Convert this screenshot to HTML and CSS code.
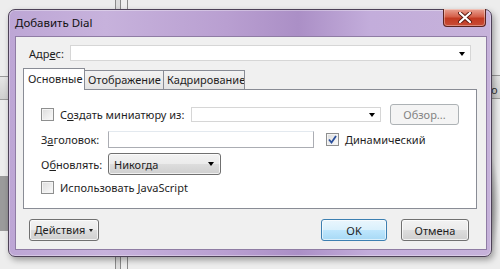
FILE: index.html
```html
<!DOCTYPE html>
<html lang="ru">
<head>
<meta charset="utf-8">
<title>Добавить Dial</title>
<link rel="stylesheet" href="styles.css">
</head>
<body>
<div class="desk">
  <div class="bg-lines bg-top"></div>
  <div class="bg-lines bg-bottom"></div>
  <div class="bg-band bg-left"></div>
  <div class="bg-block bg-left2"></div>
  <div class="bg-band bg-right"><span>o</span></div>
  <div class="bg-shadow"></div>

  <div class="window">
    <div class="titlebar">
      <span class="title">Добавить Dial</span>
      <div class="close">
        <svg width="14" height="11" viewBox="0 0 14 11"><path d="M2 1 L12 10 M12 1 L2 10" stroke="#5a1a12" stroke-width="4" stroke-linecap="round"/><path d="M2 1 L12 10 M12 1 L2 10" stroke="#ffffff" stroke-width="2.2" stroke-linecap="round"/></svg>
      </div>
    </div>
    <div class="client">
      <div class="addr-row">
        <span class="label">Адр<u>е</u>с:</span>
        <div class="combo addr-combo"><span class="arrow"></span></div>
      </div>

      <div class="tabs">
        <div class="tab active t1">Основные</div>
        <div class="tab t2">Отображение</div>
        <div class="tab t3">Кадрирование</div>
      </div>
      <div class="panel">
        <div class="row row1">
          <span class="check"></span>
          <span class="cb-label thumb-label">С<u>о</u>здать миниатюру из:</span>
          <div class="combo thumb-combo"><span class="arrow"></span></div>
          <div class="btn disabled browse">Обзор...</div>
        </div>
        <div class="row row2">
          <span class="label fixed">З<u>а</u>головок:</span>
          <div class="textbox title-box"></div>
          <span class="check checked">
            <svg width="9" height="9" viewBox="0 0 9 9"><path d="M1 4.5 L3.5 7.5 L8 1" fill="none" stroke="#2a4f9c" stroke-width="1.8"/></svg>
          </span>
          <span class="cb-label"><u>Д</u>инамический</span>
        </div>
        <div class="row row3">
          <span class="label fixed">О<u>б</u>новлять:</span>
          <div class="btn dropbtn"><span>Никогда</span><span class="arrow"></span></div>
        </div>
        <div class="row row4">
          <span class="check"></span>
          <span class="cb-label">Использовать <u>J</u>avaScript</span>
        </div>
      </div>

      <div class="footer">
        <div class="btn actions">Действия <span class="small-arrow"></span></div>
        <div class="spacer"></div>
        <div class="btn ok">OK</div>
        <div class="btn cancel">Отмена</div>
      </div>
    </div>
  </div>
</div>
</body>
</html>
```

FILE: styles.css
```css
* { box-sizing: border-box; }
html, body { margin: 0; padding: 0; }
body {
  width: 500px;
  height: 269px;
  overflow: hidden;
  background: #ececec;
  font-family: "Noto Sans", "Open Sans", sans-serif;
  font-size: 11px;
  color: #1e1e1e;
}
u { text-decoration: underline; text-underline-offset: 1px; }

.desk {
  position: relative;
  width: 500px;
  height: 269px;
  padding: 9px 8px 12px 8px;
  background: #ededed;
}

/* background decorations of the page behind */
.bg-lines {
  position: absolute;
  left: 115px;
  width: 13px;
  border-left: 1px solid #8a8a8a;
  border-right: 1px solid #8a8a8a;
  background: linear-gradient(90deg, #ddd 0 4px, #888 4px 5px, #eee 5px);
}
.bg-top { top: 0; height: 10px; }
.bg-bottom { bottom: 0; height: 14px; }
.bg-band {
  position: absolute;
  height: 24px;
  border-top: 1px solid #9a9a9a;
  border-bottom: 1px solid #9a9a9a;
  background: linear-gradient(#e6e6e6, #cfcfcf);
}
.bg-left { left: 0; top: 76px; width: 10px; }
.bg-right { right: 0; top: 75px; width: 12px; font-size: 11px; padding: 6px 0 0 3px; color: #333; }
.bg-block {
  position: absolute;
  left: 0;
  top: 176px;
  width: 10px;
  height: 55px;
  background: #9b9b9b;
}
.bg-shadow {
  position: absolute;
  right: 0;
  top: 150px;
  width: 14px;
  height: 110px;
  background: radial-gradient(ellipse at left center, rgba(60,60,60,0.55), rgba(60,60,60,0) 70%);
}

.window {
  position: relative;
  width: 484px;
  height: 248px;
  border: 1px solid #4e4258;
  border-radius: 7px;
  background: linear-gradient(90deg, #bda6d5 0%, #c7b2dc 20%, #b99fd1 45%, #ab8fc6 60%, #c3addb 75%, #c6b2da 100%);
  box-shadow: 2px 3px 6px rgba(0,0,0,0.35), inset 0 0 0 1px rgba(255,255,255,0.35);
  display: flex;
  flex-direction: column;
  padding: 0 4px 6px 6px;
}

.titlebar {
  height: 26px;
  display: flex;
  align-items: center;
  position: relative;
}
.title {
  margin-top: -1px;
  color: #111;
  font-size: 11.5px;
}
.close {
  position: absolute;
  right: 1px;
  top: -1px;
  width: 43px;
  height: 18px;
  border: 1px solid #5b2320;
  border-top: none;
  border-radius: 0 0 4px 4px;
  background: linear-gradient(#e9a293 0%, #d5604a 45%, #c23a22 55%, #c84c36 100%);
  box-shadow: inset 0 0 0 1px rgba(255,255,255,0.35);
  display: flex;
  align-items: center;
  justify-content: center;
}

.client {
  flex: 1;
  background: #f0f0f0;
  border: 1px solid #8f7ca4;
  display: flex;
  flex-direction: column;
  padding: 0 9px 0 7px;
}

.addr-row {
  display: flex;
  align-items: center;
  margin-top: 8px;
  height: 16px;
}
.label { color: #1e1e1e; }
.addr-row .label { margin-left: 6px; width: 41px; }
.combo {
  position: relative;
  height: 16px;
  background: #fff;
  border: 1px solid #d6d6d6;
}
.addr-combo { width: 401px; }
.arrow {
  position: absolute;
  right: 5px;
  top: 6px;
  width: 0; height: 0;
  border-left: 3.5px solid transparent;
  border-right: 3.5px solid transparent;
  border-top: 4px solid #000;
}

.tabs {
  display: flex;
  margin-top: 7px;
  height: 21px;
  align-items: flex-end;
  position: relative;
  z-index: 1;
}
.tab {
  height: 19px;
  padding: 0 0 0 3px;
  border: 1px solid #898c95;
  border-bottom: none;
  margin-right: -1px;
  background: linear-gradient(#f2f2f2, #e4e4e4);
  line-height: 18px;
  color: #1e1e1e;
  white-space: nowrap;
  overflow: hidden;
}
.tab.active {
  background: #fff;
  padding: 0 0 0 4px;
  line-height: 19px;
  margin-bottom: -1px;
  height: 22px;
}
.t1 { width: 62px; }
.t2 { width: 80px; }
.t3 { width: 82px; }
.panel {
  height: 120px;
  background: #fff;
  border: 1px solid #898c95;
  display: flex;
  flex-direction: column;
  padding: 14px 0 0 17px;
}

.row { display: flex; align-items: center; }
.row1 { height: 21px; }
.row2 { height: 17px; margin-top: 6px; }
.row3 { height: 22px; margin-top: 5px; }
.row4 { height: 13px; margin-top: 6px; }

.check {
  width: 13px;
  height: 13px;
  border: 1px solid #8e8f8f;
  background: linear-gradient(135deg, #dcdcdc, #fbfbfb);
  box-shadow: inset 0 0 0 1px #f4f4f4;
  display: inline-flex;
  align-items: center;
  justify-content: center;
  flex: none;
}
.cb-label { margin-left: 6px; white-space: nowrap; }
.thumb-label { width: 131px; flex: none; }
.thumb-combo { width: 190px; height: 15px; flex: none; }
.thumb-combo .arrow { top: 5px; right: 5px; }

.btn {
  display: flex;
  align-items: center;
  justify-content: center;
  border: 1px solid #707070;
  border-radius: 3px;
  background: linear-gradient(#f2f2f2 0%, #ebebeb 50%, #dddddd 51%, #cfcfcf 100%);
  box-shadow: inset 0 0 0 1px rgba(255,255,255,0.7);
  color: #1e1e1e;
}
.btn.disabled {
  border-color: #adb2b5;
  background: #f4f4f4;
  color: #838383;
  box-shadow: none;
}
.browse { width: 69px; height: 21px; margin-left: 9px; }

.label.fixed { width: 67px; }
.title-box {
  width: 206px;
  height: 17px;
  background: #fff;
  border: 1px solid #abadb3;
  border-top-color: #e3e9ef;
}
.row2 .check { margin-left: 12px; }

.dropbtn {
  width: 113px;
  height: 22px;
  position: relative;
  justify-content: flex-start;
  padding-left: 5px;
}
.dropbtn .arrow { right: 6px; top: 8px; }

.footer {
  display: flex;
  align-items: center;
  margin-top: 10px;
  height: 22px;
  padding-left: 6px;
}
.actions { width: 70px; height: 22px; padding-bottom: 1px; }
.small-arrow {
  display: inline-block;
  margin-left: 4px;
  margin-top: 1px;
  width: 0; height: 0;
  border-left: 2.5px solid transparent;
  border-right: 2.5px solid transparent;
  border-top: 3px solid #222;
}
.spacer { flex: 1; }
.ok {
  width: 66px; height: 22px;
  border-color: #3c7fb1;
  background: linear-gradient(#eaf6fd 0%, #d9f0fc 50%, #bee6fd 51%, #a7d9f5 100%);
  box-shadow: inset 0 0 0 1px rgba(255,255,255,0.6);
}
.cancel { width: 68px; height: 22px; margin-left: 14px; margin-right: 8px; }
```
